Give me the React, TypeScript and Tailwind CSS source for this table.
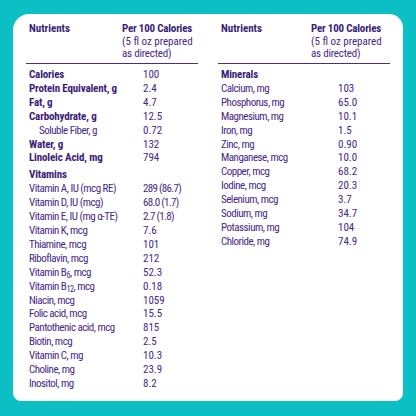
import React from "react";

type Row = { n: React.ReactNode; v?: string; b?: boolean; indent?: boolean; head?: boolean };

const leftRows: Row[] = [
  { n: "Calories", v: "100", b: true },
  { n: "Protein Equivalent, g", v: "2.4", b: true },
  { n: "Fat, g", v: "4.7", b: true },
  { n: "Carbohydrate, g", v: "12.5", b: true },
  { n: "Soluble Fiber, g", v: "0.72", indent: true },
  { n: "Water, g", v: "132", b: true },
  { n: "Linoleic Acid, mg", v: "794", b: true },
  { n: "Vitamins", head: true },
  { n: "Vitamin A, IU (mcg RE)", v: "289 (86.7)" },
  { n: "Vitamin D, IU (mcg)", v: "68.0 (1.7)" },
  { n: "Vitamin E, IU (mg \u03b1-TE)", v: "2.7 (1.8)" },
  { n: "Vitamin K, mcg", v: "7.6" },
  { n: "Thiamine, mcg", v: "101" },
  { n: "Riboflavin, mcg", v: "212" },
  {
    n: (
      <>
        Vitamin B<sub>6</sub>, mcg
      </>
    ),
    v: "52.3",
  },
  {
    n: (
      <>
        Vitamin B<sub>12</sub>, mcg
      </>
    ),
    v: "0.18",
  },
  { n: "Niacin, mcg", v: "1059" },
  { n: "Folic acid, mcg", v: "15.5" },
  { n: "Pantothenic acid, mcg", v: "815" },
  { n: "Biotin, mcg", v: "2.5" },
  { n: "Vitamin C, mg", v: "10.3" },
  { n: "Choline, mg", v: "23.9" },
  { n: "Inositol, mg", v: "8.2" },
];

const rightRows: Row[] = [
  { n: "Minerals", b: true },
  { n: "Calcium, mg", v: "103" },
  { n: "Phosphorus, mg", v: "65.0" },
  { n: "Magnesium, mg", v: "10.1" },
  { n: "Iron, mg", v: "1.5" },
  { n: "Zinc, mg", v: "0.90" },
  { n: "Manganese, mcg", v: "10.0" },
  { n: "Copper, mcg", v: "68.2" },
  { n: "Iodine, mcg", v: "20.3" },
  { n: "Selenium, mcg", v: "3.7" },
  { n: "Sodium, mg", v: "34.7" },
  { n: "Potassium, mg", v: "104" },
  { n: "Chloride, mg", v: "74.9" },
];

function Table({ rows, nameW, valPad }: { rows: Row[]; nameW: string; valPad: string }) {
  return (
    <div className="w-[172px]">
      <div className="flex border-b border-[#4b2a8c] pb-[4px]">
        <div className={`${nameW} shrink-0 pl-[3px] font-bold leading-[14px] text-[#3a1c78]`}>Nutrients</div>
        <div className="flex flex-col">
          <div className="font-bold leading-[14px] text-[#3a1c78] whitespace-nowrap tracking-[-0.2px]">Per 100 Calories</div>
          <div className="leading-[11.5px] text-[#45278a] whitespace-nowrap">(5 fl oz prepared</div>
          <div className="leading-[11.5px] text-[#45278a] whitespace-nowrap tracking-[-0.2px]">as directed)</div>
        </div>
      </div>
      <div className="mt-[4px] flex flex-col">
        {rows.map((r, i) => {
          const bold = r.b || r.head;
          return (
            <div
              key={i}
              className={`flex leading-[13.9px] ${r.head ? "mt-[3px]" : ""} ${
                bold ? "font-bold text-[#3a1c78]" : "text-[#45278a]"
              }`}
            >
              <div
                className={`${nameW} shrink-0 whitespace-nowrap ${r.indent ? "pl-[13px]" : "pl-[3px]"} ${
                  bold ? "tracking-[-0.15px]" : "tracking-[-0.5px]"
                }`}
              >
                {r.n}
              </div>
              {r.v !== undefined && (
                <div
                  className={`${valPad} whitespace-nowrap font-normal text-[#45278a] ${
                    r.v.includes("(") ? "tracking-[-0.7px]" : ""
                  }`}
                >
                  {r.v}
                </div>
              )}
            </div>
          );
        })}
      </div>
    </div>
  );
}

export default function App() {
  return (
    <div
      className="w-[416px] h-[416px] bg-[#0bbfc5] pt-[14px] pl-[13px] pr-[13px] pb-[15px]"
      style={{ fontFamily: '"Liberation Sans Narrow", "Arial Narrow", "Roboto Condensed", Roboto, sans-serif' }}
    >
      <div className="h-full bg-white rounded-tl-[16px] rounded-tr-[14px] rounded-b-[8px] pt-[8px] pl-[13px] flex gap-[20px] text-[11px]">
        <Table rows={leftRows} nameW="w-[96px]" valPad="pl-[21px]" />
        <Table rows={rightRows} nameW="w-[93px]" valPad="pl-[27px]" />
      </div>
    </div>
  );
}
